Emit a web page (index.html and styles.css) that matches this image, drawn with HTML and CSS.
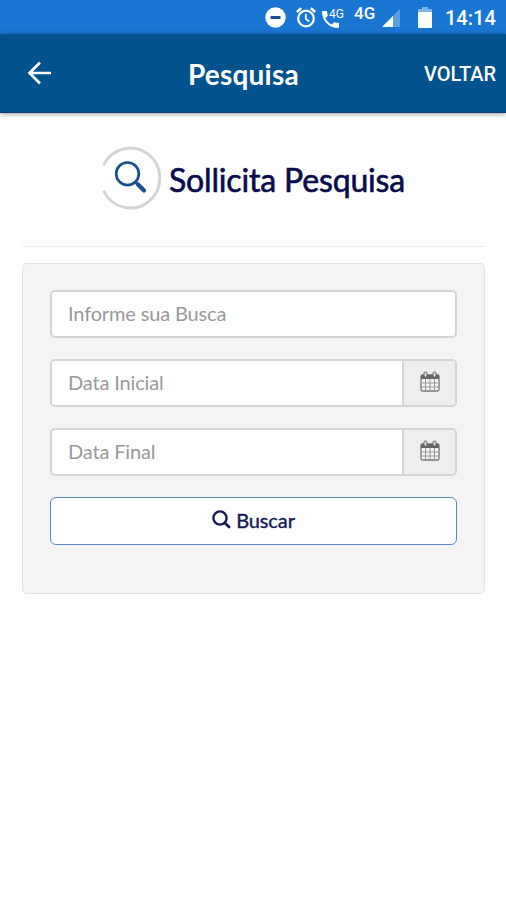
FILE: index.html
```html
<!DOCTYPE html>
<html lang="pt-BR">
<head>
<meta charset="utf-8">
<title>Pesquisa</title>
<link rel="stylesheet" href="styles.css">
</head>
<body>
<div class="status">
  <svg class="dnd" width="21" height="21" viewBox="0 0 21 21"><circle cx="10.5" cy="10.5" r="10.2" fill="#fff"/><path d="M5.500 9h10v3h-10z" fill="#174f91"/></svg>
  <svg class="alarm" width="21" height="22" viewBox="0 0 21 22" fill="none" stroke="#fff"><circle cx="10" cy="12.500" r="7.800" stroke-width="2.200"/><path d="M.8 6 5.200 2.200M19.200 6l-4.400-3.800" stroke-width="2.400"/><path d="M9.800 7.800v5.100l3.500 2.600" stroke-width="1.700"/></svg>
  <div class="call">
    <svg width="17" height="17" viewBox="3 3 18 18"><path fill="#fff" d="M6.620 10.790c1.440 2.830 3.760 5.140 6.590 6.590l2.200-2.200c.27-.27.67-.36 1.020-.24 1.120.37 2.330.57 3.570.57.55 0 1 .45 1 1V20c0 .55-.45 1-1 1C10.610 21 3 13.390 3 4c0-.55.45-1 1-1h3.500c.55 0 1 .45 1 1 0 1.250.2 2.450.57 3.570.11.350.030.740-.25 1.020z"/></svg>
    <span class="call-net">4G</span>
  </div>
  <span class="net">4G</span>
  <svg class="signal" width="18" height="18" viewBox="0 0 18 18"><path d="M0 18 18 0v18z" fill="#5b9ee0"/><path d="M0 18 11 7v11z" fill="#fff"/></svg>
  <svg class="battery" width="14" height="21" viewBox="0 0 14 21"><path d="M4 0h6v2h3q1 0 1 1v3H0V3q0-1 1-1h3z" fill="#80b4e7"/><path d="M0 5h14v15q0 1-1 1H1q-1 0-1-1z" fill="#fff"/></svg>
  <span class="time">14:14</span>
</div>
<header class="bar">
  <svg class="back" width="24" height="24" viewBox="0 0 24 24" fill="none" stroke="#fff" stroke-width="2.700"><path d="M24 12H2.500M13 1.500 2.500 12 13 22.500"/></svg>
  <h1 class="bar-title">Pesquisa</h1>
  <span class="voltar">VOLTAR</span>
</header>
<main class="content">
  <div class="heading">
    <svg class="logo" width="60" height="64" viewBox="0 0 60 64" fill="none"><path d="M1.500 19.500A29.500 30 0 1 1 1.500 44.500" stroke="#d4d4d6" stroke-width="3"/><circle cx="25.500" cy="27.800" r="11.300" stroke="#17508f" stroke-width="2.700"/><path d="m33.500 36 2 2" stroke="#17508f" stroke-width="3"/><path d="m36 38.500 6 6" stroke="#17508f" stroke-width="4.200" stroke-linecap="round"/></svg>
    <h2 class="heading-text">Sollicita Pesquisa</h2>
  </div>
  <form class="panel">
    <div class="field"><span class="value">Informe sua Busca</span></div>
    <div class="field"><span class="value">Data Inicial</span><span class="addon"><svg class="cal" width="20" height="21" viewBox="0 0 20 21"><rect x="1" y="4" width="18" height="16" rx="1.500" fill="#f4f4f4" stroke="#777" stroke-width="1.300"/><path d="M1 4h18v4H1z" fill="#666"/><path d="M5.500 8v12M10 8v12M14.500 8v12M1 12h18M1 16h18" stroke="#999"/><rect x="4" y="1" width="3" height="5" rx="1.300" fill="#ddd" stroke="#666"/><rect x="13" y="1" width="3" height="5" rx="1.300" fill="#ddd" stroke="#666"/></svg></span></div>
    <div class="field"><span class="value">Data Final</span><span class="addon"><svg class="cal" width="20" height="21" viewBox="0 0 20 21"><rect x="1" y="4" width="18" height="16" rx="1.500" fill="#f4f4f4" stroke="#777" stroke-width="1.300"/><path d="M1 4h18v4H1z" fill="#666"/><path d="M5.500 8v12M10 8v12M14.500 8v12M1 12h18M1 16h18" stroke="#999"/><rect x="4" y="1" width="3" height="5" rx="1.300" fill="#ddd" stroke="#666"/><rect x="13" y="1" width="3" height="5" rx="1.300" fill="#ddd" stroke="#666"/></svg></span></div>
    <button class="submit" type="button"><svg width="19" height="19" viewBox="0 0 19 19" fill="none" stroke="#151b57"><circle cx="8" cy="8" r="6.600" stroke-width="2.400"/><path d="m13 13 4 4" stroke-width="2.800" stroke-linecap="round"/></svg><span>Buscar</span></button>
  </form>
</main>
</body>
</html>
```

FILE: styles.css
```css
* { box-sizing: border-box; }
body { margin: 0; min-height: 900px; background: #fff; font-family: Lato, sans-serif; }
svg { display: block; flex: none; }
.status { height: 34px; background: #1976d2; color: #fff; display: flex; align-items: flex-start; padding-left: 265px; font-family: Roboto, sans-serif; font-weight: 500; white-space: nowrap; }
.dnd { margin-top: 7px; }
.alarm { margin: 6px 0 0 10px; }
.call { position: relative; width: 22px; height: 17px; margin: 11px 0 0 5px; }
.call-net { position: absolute; left: 7px; top: -3px; font-size: 12px; line-height: 12px; font-weight: 400; }
.net { width: 22px; margin: 5px 0 0 10px; font-size: 17px; line-height: 17px; }
.signal { margin: 9px 0 0 6px; }
.battery { margin: 7px 0 0 18px; }
.time { margin: 8px 0 0 13px; font-size: 20px; line-height: 20px; }
.bar { height: 79px; background: #01528d; color: #fff; display: grid; grid-template-columns: 161px 1fr 92px; align-items: center; border-bottom: 1px solid #083b78; box-shadow: 0 1px 5px rgba(0, 0, 0, .4); }
.back { margin-left: 27px; }
.bar-title { margin: 2px 0 0 27px; font-size: 28px; line-height: 34px; font-weight: 700; letter-spacing: .2px; }
.voltar { margin: 2px 0 0 10px; font: 500 20px/24px Roboto, sans-serif; }
.content { padding: 32px 21px 0 22px; }
.heading { height: 102px; display: flex; align-items: flex-start; padding-left: 80px; border-bottom: 1px solid #eee; }
.logo { margin-top: 1px; }
.heading-text { margin: 15px 0 0 7px; font-size: 32px; line-height: 40px; font-weight: 400; letter-spacing: -.17px; color: #080b4c; -webkit-text-stroke: .6px #080b4c; white-space: nowrap; }
.panel { margin-top: 16px; height: 331px; background: #f4f4f4; border: 1.500px solid #e2e2e2; border-radius: 5px; padding: 26px 27px 0 27px; display: flex; flex-direction: column; gap: 21px; }
.field { height: 48px; display: flex; align-items: center; background: #fff; border: 2px solid #d4d4d4; border-radius: 5px; overflow: hidden; }
.value { flex: 1; margin-top: -2px; padding-left: 16px; font-size: 20px; line-height: 24px; letter-spacing: -.15px; color: #999; }
.addon { width: 53px; height: 100%; display: flex; align-items: center; justify-content: center; padding-bottom: 3px; background: #eee; border-left: 2px solid #d4d4d4; }
.submit { height: 48px; display: flex; align-items: center; justify-content: center; gap: 5px; padding: 0 0 3px; background: #fff; border: 1.500px solid #5d86bc; border-radius: 6px; font: 400 20px/24px Lato, sans-serif; letter-spacing: -.1px; color: #151b57; -webkit-text-stroke: .4px #151b57; }
```
